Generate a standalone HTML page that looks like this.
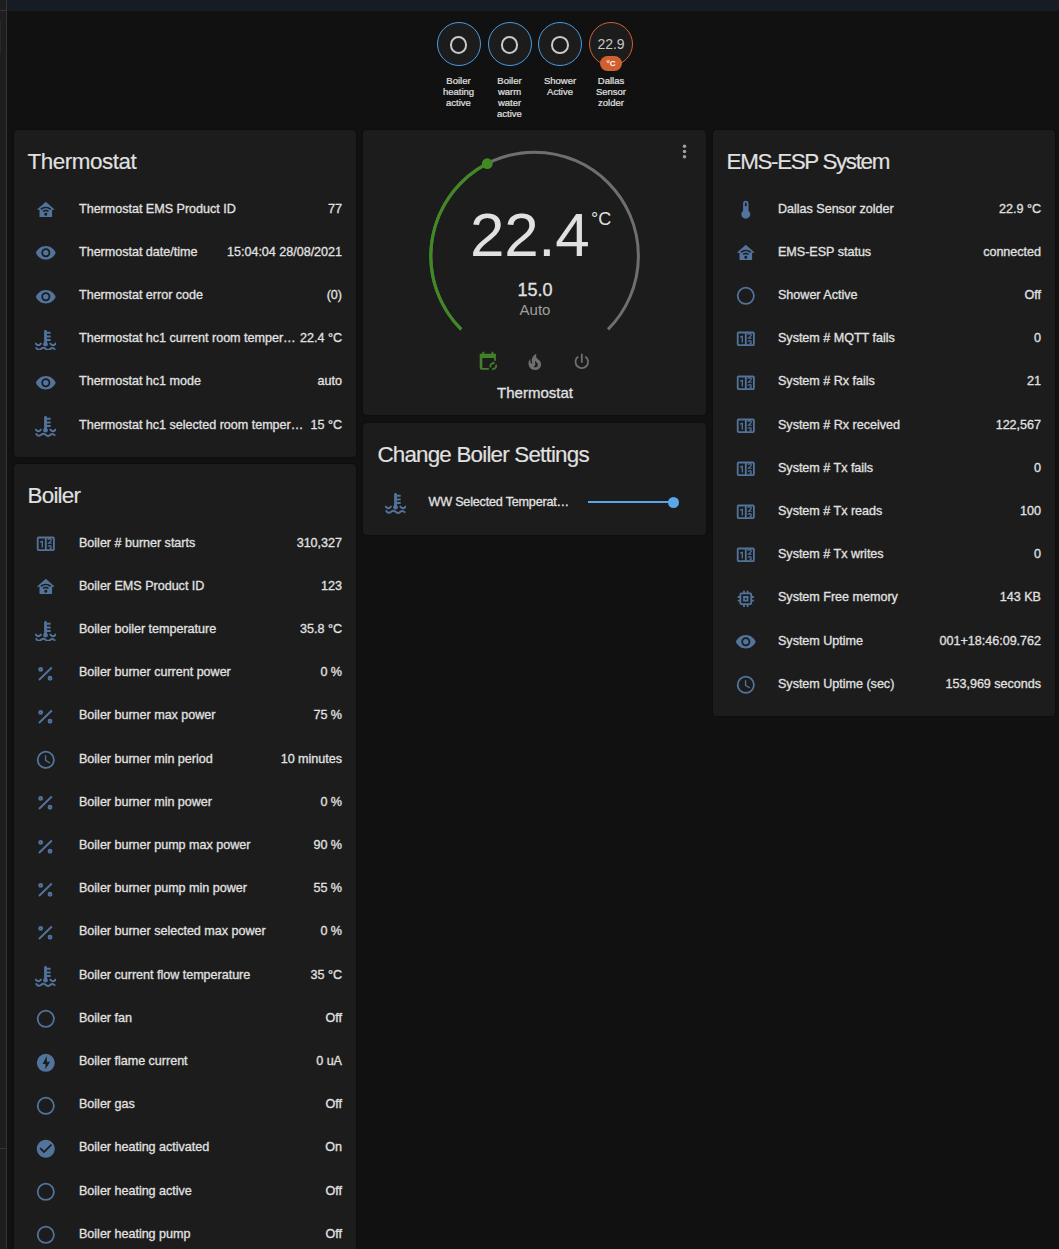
<!DOCTYPE html>
<html><head><meta charset="utf-8"><style>
*{margin:0;padding:0;box-sizing:border-box}
html,body{width:1059px;height:1249px;overflow:hidden;background:#111111;font-family:"Liberation Sans",sans-serif;color:#e1e1e1}
.abs{position:absolute}
.card{position:absolute;background:#1c1c1c;border-radius:4px;box-shadow:0 0 2px rgba(0,0,0,0.6)}
.title{position:absolute;font-size:22.4px;line-height:22px;white-space:nowrap;letter-spacing:-0.45px;color:#e1e1e1;-webkit-text-stroke:0.15px #e1e1e1}
.nm,.val{position:absolute;font-size:12.6px;line-height:18px;white-space:nowrap;color:#e1e1e1;-webkit-text-stroke:0.3px #e1e1e1;letter-spacing:-0.03px}
.ic{position:absolute}
.badge{position:absolute;top:22px;width:44px;height:44px;border-radius:50%;border:1.8px solid #4a9be0;background:#1c1c1c}
.blabel{position:absolute;top:75px;width:50px;text-align:center;font-size:9.5px;line-height:11px;color:#e1e1e1;-webkit-text-stroke:0.2px #e1e1e1}
</style></head>
<body>
<div class="abs" style="left:0;top:0;width:6px;height:1249px;background:#1e1e1e"></div>
<div class="abs" style="left:6px;top:0;width:1px;height:1249px;background:#353535"></div>
<div class="abs" style="left:0;top:10px;width:6px;height:1px;background:#333"></div>
<div class="abs" style="left:0;top:1148px;width:6px;height:1px;background:#333"></div>
<div class="abs" style="left:0;top:20px;width:1px;height:33px;background:#1f2a35"></div>
<div class="abs" style="left:7px;top:0;width:1052px;height:11px;background:#161c23"></div>
<div class="badge" style="left:436.5px;border-color:#4a9be0"></div>
<div class="abs" style="left:449.7px;top:36.2px;width:17.6px;height:17.6px;border-radius:50%;border:2px solid #c8c8c8"></div>
<div class="blabel" style="left:433.5px">Boiler<br>heating<br>active</div>
<div class="badge" style="left:487.5px;border-color:#4a9be0"></div>
<div class="abs" style="left:500.7px;top:36.2px;width:17.6px;height:17.6px;border-radius:50%;border:2px solid #c8c8c8"></div>
<div class="blabel" style="left:484.5px">Boiler<br>warm<br>water<br>active</div>
<div class="badge" style="left:538px;border-color:#4a9be0"></div>
<div class="abs" style="left:551.2px;top:36.2px;width:17.6px;height:17.6px;border-radius:50%;border:2px solid #c8c8c8"></div>
<div class="blabel" style="left:535px">Shower<br>Active</div>
<div class="badge" style="left:589px;border-color:#d0602f"></div>
<div class="abs" style="left:589px;top:36px;width:44px;text-align:center;font-size:14px;line-height:16px;color:#c8c8c8">22.9</div>
<div class="abs" style="left:600px;top:56px;width:22px;height:15px;border-radius:8px;background:#d0602f;color:#fff;font-size:8px;font-weight:bold;text-align:center;line-height:15px">°C</div>
<div class="blabel" style="left:586px">Dallas<br>Sensor<br>zolder</div>
<div class="card" style="left:14px;top:130px;width:342px;height:327px;">
<div class="title" style="left:13.6px;top:20.7px;letter-spacing:-0.45px">Thermostat</div>
<svg class="ic" style="left:20.80px;top:69.20px;width:21.6px;height:21.6px" viewBox="0 0 24 24" fill="#51739c" stroke="#51739c" stroke-width="0"><path d="M12,3L2,12H5V20H19V12H22L12,3M12,8.5C14.34,8.5 16.46,9.43 18,10.94L16.8,12.12C15.58,10.91 13.88,10.17 12,10.17C10.12,10.17 8.42,10.91 7.2,12.12L6,10.94C7.54,9.43 9.66,8.5 12,8.5M12,11.83C13.4,11.83 14.67,12.39 15.6,13.3L14.4,14.47C13.79,13.87 12.94,13.5 12,13.5C11.06,13.5 10.21,13.87 9.6,14.47L8.4,13.3C9.33,12.39 10.6,11.83 12,11.83M12,15.17C12.94,15.17 13.7,15.91 13.7,16.83C13.7,17.750 12.94,18.5 12,18.5C11.06,18.5 10.3,17.75 10.3,16.83C10.3,15.91 11.06,15.17 12,15.17Z"/></svg>
<div class="nm" style="left:65px;top:69.50px">Thermostat EMS Product ID</div>
<div class="val" style="right:14px;top:69.50px">77</div>
<svg class="ic" style="left:20.80px;top:112.40px;width:21.6px;height:21.6px" viewBox="0 0 24 24" fill="#51739c" stroke="#51739c" stroke-width="0"><path d="M12,9A3,3 0 0,0 9,12A3,3 0 0,0 12,15A3,3 0 0,0 15,12A3,3 0 0,0 12,9M12,17A5,5 0 0,1 7,12A5,5 0 0,1 12,7A5,5 0 0,1 17,12A5,5 0 0,1 12,17M12,4.5C7,4.5 2.730,7.61 1,12C2.73,16.39 7,19.5 12,19.5C17,19.5 21.27,16.39 23,12C21.27,7.61 17,4.5 12,4.5Z"/></svg>
<div class="nm" style="left:65px;top:112.70px">Thermostat date/time</div>
<div class="val" style="right:14px;top:112.70px">15:04:04 28/08/2021</div>
<svg class="ic" style="left:20.80px;top:155.60px;width:21.6px;height:21.6px" viewBox="0 0 24 24" fill="#51739c" stroke="#51739c" stroke-width="0"><path d="M12,9A3,3 0 0,0 9,12A3,3 0 0,0 12,15A3,3 0 0,0 15,12A3,3 0 0,0 12,9M12,17A5,5 0 0,1 7,12A5,5 0 0,1 12,7A5,5 0 0,1 17,12A5,5 0 0,1 12,17M12,4.5C7,4.5 2.730,7.61 1,12C2.73,16.39 7,19.5 12,19.5C17,19.5 21.27,16.39 23,12C21.27,7.61 17,4.5 12,4.5Z"/></svg>
<div class="nm" style="left:65px;top:155.90px">Thermostat error code</div>
<div class="val" style="right:14px;top:155.90px">(0)</div>
<svg class="ic" style="left:20.80px;top:198.80px;width:21.6px;height:21.6px" viewBox="0 0 24 24" fill="#51739c" stroke="#51739c" stroke-width="0"><g transform="translate(0.2,1.1)"><g fill="none" stroke-linecap="round"><path d="M11.5,1.5V15.5" stroke-width="3.2"/><path d="M13,3H17.2M13,7.2H17.2M13,11.1H17.2" stroke-width="2.2" stroke-linecap="butt"/><path d="M0.7,15.2Q3.5,18.8 6.3,15.2M16.9,15.2Q19.8,18.8 22.6,15.2" stroke-width="2.2"/><path d="M1.3,20Q2.8,22.6 4.9,21.8Q6.2,21.3 7,20.6Q9.5,18.6 12,21.2Q14.4,23.3 16.6,21.2Q19.2,18.8 21.6,21.3" stroke-width="2.2"/></g><circle cx="11.5" cy="15.8" r="2.6"/></g></svg>
<div class="nm" style="left:65px;top:199.10px">Thermostat hc1 current room temper…</div>
<div class="val" style="right:14px;top:199.10px">22.4 °C</div>
<svg class="ic" style="left:20.80px;top:242.00px;width:21.6px;height:21.6px" viewBox="0 0 24 24" fill="#51739c" stroke="#51739c" stroke-width="0"><path d="M12,9A3,3 0 0,0 9,12A3,3 0 0,0 12,15A3,3 0 0,0 15,12A3,3 0 0,0 12,9M12,17A5,5 0 0,1 7,12A5,5 0 0,1 12,7A5,5 0 0,1 17,12A5,5 0 0,1 12,17M12,4.5C7,4.5 2.730,7.61 1,12C2.73,16.39 7,19.5 12,19.5C17,19.5 21.27,16.39 23,12C21.27,7.61 17,4.5 12,4.5Z"/></svg>
<div class="nm" style="left:65px;top:242.30px">Thermostat hc1 mode</div>
<div class="val" style="right:14px;top:242.30px">auto</div>
<svg class="ic" style="left:20.80px;top:285.20px;width:21.6px;height:21.6px" viewBox="0 0 24 24" fill="#51739c" stroke="#51739c" stroke-width="0"><g transform="translate(0.2,1.1)"><g fill="none" stroke-linecap="round"><path d="M11.5,1.5V15.5" stroke-width="3.2"/><path d="M13,3H17.2M13,7.2H17.2M13,11.1H17.2" stroke-width="2.2" stroke-linecap="butt"/><path d="M0.7,15.2Q3.5,18.8 6.3,15.2M16.9,15.2Q19.8,18.8 22.6,15.2" stroke-width="2.2"/><path d="M1.3,20Q2.8,22.6 4.9,21.8Q6.2,21.3 7,20.6Q9.5,18.6 12,21.2Q14.4,23.3 16.6,21.2Q19.2,18.8 21.6,21.3" stroke-width="2.2"/></g><circle cx="11.5" cy="15.8" r="2.6"/></g></svg>
<div class="nm" style="left:65px;top:285.50px">Thermostat hc1 selected room temper…</div>
<div class="val" style="right:14px;top:285.50px">15 °C</div>
</div>
<div class="card" style="left:14px;top:464px;width:342px;height:900px;">
<div class="title" style="left:13.6px;top:20.7px;letter-spacing:-0.8px">Boiler</div>
<svg class="ic" style="left:20.80px;top:69.20px;width:21.6px;height:21.6px" viewBox="0 0 24 24" fill="#51739c" stroke="#51739c" stroke-width="0"><path d="M4,4H20A2,2 0 0,1 22,6V18A2,2 0 0,1 20,20H4A2,2 0 0,1 2,18V6A2,2 0 0,1 4,4M4,6V18H11V6H4M13,6V18H20V6H13Z"/><path d="M8.9,16H7.4V10.2L5.6,10.8V9.5L8.8,8.4H8.9V16Z"/><path d="M14.5,7.6Q14.6,6.3 16.3,6.3Q18.3,6.4 18,8.2L15.1,11.4H18.6M14.6,15.3Q14.8,14 16.4,14Q18.2,14.1 18.1,15.6Q18,16.9 16.2,17M16.2,17Q18.3,17.1 18.2,18" fill="none" stroke-width="1.3"/></svg>
<div class="nm" style="left:65px;top:69.50px">Boiler # burner starts</div>
<div class="val" style="right:14px;top:69.50px">310,327</div>
<svg class="ic" style="left:20.80px;top:112.40px;width:21.6px;height:21.6px" viewBox="0 0 24 24" fill="#51739c" stroke="#51739c" stroke-width="0"><path d="M12,3L2,12H5V20H19V12H22L12,3M12,8.5C14.34,8.5 16.46,9.43 18,10.94L16.8,12.12C15.58,10.91 13.88,10.17 12,10.17C10.12,10.17 8.42,10.91 7.2,12.12L6,10.94C7.54,9.43 9.66,8.5 12,8.5M12,11.83C13.4,11.83 14.67,12.39 15.6,13.3L14.4,14.47C13.79,13.87 12.94,13.5 12,13.5C11.06,13.5 10.21,13.87 9.6,14.47L8.4,13.3C9.33,12.39 10.6,11.83 12,11.83M12,15.17C12.94,15.17 13.7,15.91 13.7,16.83C13.7,17.750 12.94,18.5 12,18.5C11.06,18.5 10.3,17.75 10.3,16.83C10.3,15.91 11.06,15.17 12,15.17Z"/></svg>
<div class="nm" style="left:65px;top:112.70px">Boiler EMS Product ID</div>
<div class="val" style="right:14px;top:112.70px">123</div>
<svg class="ic" style="left:20.80px;top:155.60px;width:21.6px;height:21.6px" viewBox="0 0 24 24" fill="#51739c" stroke="#51739c" stroke-width="0"><g transform="translate(0.2,1.1)"><g fill="none" stroke-linecap="round"><path d="M11.5,1.5V15.5" stroke-width="3.2"/><path d="M13,3H17.2M13,7.2H17.2M13,11.1H17.2" stroke-width="2.2" stroke-linecap="butt"/><path d="M0.7,15.2Q3.5,18.8 6.3,15.2M16.9,15.2Q19.8,18.8 22.6,15.2" stroke-width="2.2"/><path d="M1.3,20Q2.8,22.6 4.9,21.8Q6.2,21.3 7,20.6Q9.5,18.6 12,21.2Q14.4,23.3 16.6,21.2Q19.2,18.8 21.6,21.3" stroke-width="2.2"/></g><circle cx="11.5" cy="15.8" r="2.6"/></g></svg>
<div class="nm" style="left:65px;top:155.90px">Boiler boiler temperature</div>
<div class="val" style="right:14px;top:155.90px">35.8 °C</div>
<svg class="ic" style="left:20.80px;top:198.80px;width:21.6px;height:21.6px" viewBox="0 0 24 24" fill="#51739c" stroke="#51739c" stroke-width="0"><g fill="none" stroke-width="2.2"><path d="M4.4,18.8L18.7,5"/><circle cx="6.3" cy="7.1" r="1.6"/><circle cx="16.7" cy="16.9" r="1.6"/></g></svg>
<div class="nm" style="left:65px;top:199.10px">Boiler burner current power</div>
<div class="val" style="right:14px;top:199.10px">0 %</div>
<svg class="ic" style="left:20.80px;top:242.00px;width:21.6px;height:21.6px" viewBox="0 0 24 24" fill="#51739c" stroke="#51739c" stroke-width="0"><g fill="none" stroke-width="2.2"><path d="M4.4,18.8L18.7,5"/><circle cx="6.3" cy="7.1" r="1.6"/><circle cx="16.7" cy="16.9" r="1.6"/></g></svg>
<div class="nm" style="left:65px;top:242.30px">Boiler burner max power</div>
<div class="val" style="right:14px;top:242.30px">75 %</div>
<svg class="ic" style="left:20.80px;top:285.20px;width:21.6px;height:21.6px" viewBox="0 0 24 24" fill="#51739c" stroke="#51739c" stroke-width="0"><path d="M12,20A8,8 0 0,0 20,12A8,8 0 0,0 12,4A8,8 0 0,0 4,12A8,8 0 0,0 12,20M12,2A10,10 0 0,1 22,12A10,10 0 0,1 12,22C6.47,22 2,17.5 2,12A10,10 0 0,1 12,2M12.5,7V12.25L17,14.92L16.25,16.15L11,13V7H12.5Z"/></svg>
<div class="nm" style="left:65px;top:285.50px">Boiler burner min period</div>
<div class="val" style="right:14px;top:285.50px">10 minutes</div>
<svg class="ic" style="left:20.80px;top:328.40px;width:21.6px;height:21.6px" viewBox="0 0 24 24" fill="#51739c" stroke="#51739c" stroke-width="0"><g fill="none" stroke-width="2.2"><path d="M4.4,18.8L18.7,5"/><circle cx="6.3" cy="7.1" r="1.6"/><circle cx="16.7" cy="16.9" r="1.6"/></g></svg>
<div class="nm" style="left:65px;top:328.70px">Boiler burner min power</div>
<div class="val" style="right:14px;top:328.70px">0 %</div>
<svg class="ic" style="left:20.80px;top:371.60px;width:21.6px;height:21.6px" viewBox="0 0 24 24" fill="#51739c" stroke="#51739c" stroke-width="0"><g fill="none" stroke-width="2.2"><path d="M4.4,18.8L18.7,5"/><circle cx="6.3" cy="7.1" r="1.6"/><circle cx="16.7" cy="16.9" r="1.6"/></g></svg>
<div class="nm" style="left:65px;top:371.90px">Boiler burner pump max power</div>
<div class="val" style="right:14px;top:371.90px">90 %</div>
<svg class="ic" style="left:20.80px;top:414.80px;width:21.6px;height:21.6px" viewBox="0 0 24 24" fill="#51739c" stroke="#51739c" stroke-width="0"><g fill="none" stroke-width="2.2"><path d="M4.4,18.8L18.7,5"/><circle cx="6.3" cy="7.1" r="1.6"/><circle cx="16.7" cy="16.9" r="1.6"/></g></svg>
<div class="nm" style="left:65px;top:415.10px">Boiler burner pump min power</div>
<div class="val" style="right:14px;top:415.10px">55 %</div>
<svg class="ic" style="left:20.80px;top:458.00px;width:21.6px;height:21.6px" viewBox="0 0 24 24" fill="#51739c" stroke="#51739c" stroke-width="0"><g fill="none" stroke-width="2.2"><path d="M4.4,18.8L18.7,5"/><circle cx="6.3" cy="7.1" r="1.6"/><circle cx="16.7" cy="16.9" r="1.6"/></g></svg>
<div class="nm" style="left:65px;top:458.30px">Boiler burner selected max power</div>
<div class="val" style="right:14px;top:458.30px">0 %</div>
<svg class="ic" style="left:20.80px;top:501.20px;width:21.6px;height:21.6px" viewBox="0 0 24 24" fill="#51739c" stroke="#51739c" stroke-width="0"><g transform="translate(0.2,1.1)"><g fill="none" stroke-linecap="round"><path d="M11.5,1.5V15.5" stroke-width="3.2"/><path d="M13,3H17.2M13,7.2H17.2M13,11.1H17.2" stroke-width="2.2" stroke-linecap="butt"/><path d="M0.7,15.2Q3.5,18.8 6.3,15.2M16.9,15.2Q19.8,18.8 22.6,15.2" stroke-width="2.2"/><path d="M1.3,20Q2.8,22.6 4.9,21.8Q6.2,21.3 7,20.6Q9.5,18.6 12,21.2Q14.4,23.3 16.6,21.2Q19.2,18.8 21.6,21.3" stroke-width="2.2"/></g><circle cx="11.5" cy="15.8" r="2.6"/></g></svg>
<div class="nm" style="left:65px;top:501.50px">Boiler current flow temperature</div>
<div class="val" style="right:14px;top:501.50px">35 °C</div>
<svg class="ic" style="left:20.80px;top:544.40px;width:21.6px;height:21.6px" viewBox="0 0 24 24" fill="#51739c" stroke="#51739c" stroke-width="0"><path d="M12,20A8,8 0 0,1 4,12A8,8 0 0,1 12,4A8,8 0 0,1 20,12A8,8 0 0,1 12,20M12,2A10,10 0 0,0 2,12A10,10 0 0,0 12,22A10,10 0 0,0 22,12A10,10 0 0,0 12,2Z"/></svg>
<div class="nm" style="left:65px;top:544.70px">Boiler fan</div>
<div class="val" style="right:14px;top:544.70px">Off</div>
<svg class="ic" style="left:20.80px;top:587.60px;width:21.6px;height:21.6px" viewBox="0 0 24 24" fill="#51739c" stroke="#51739c" stroke-width="0"><path fill-rule="evenodd" d="M12,2A10,10 0 0,0 2,12A10,10 0 0,0 12,22A10,10 0 0,0 22,12A10,10 0 0,0 12,2M13,4.5L8.5,13.3H11.7L11.5,19.2L16.8,10.8H13.2Z"/></svg>
<div class="nm" style="left:65px;top:587.90px">Boiler flame current</div>
<div class="val" style="right:14px;top:587.90px">0 uA</div>
<svg class="ic" style="left:20.80px;top:630.80px;width:21.6px;height:21.6px" viewBox="0 0 24 24" fill="#51739c" stroke="#51739c" stroke-width="0"><path d="M12,20A8,8 0 0,1 4,12A8,8 0 0,1 12,4A8,8 0 0,1 20,12A8,8 0 0,1 12,20M12,2A10,10 0 0,0 2,12A10,10 0 0,0 12,22A10,10 0 0,0 22,12A10,10 0 0,0 12,2Z"/></svg>
<div class="nm" style="left:65px;top:631.10px">Boiler gas</div>
<div class="val" style="right:14px;top:631.10px">Off</div>
<svg class="ic" style="left:20.80px;top:674.00px;width:21.6px;height:21.6px" viewBox="0 0 24 24" fill="#51739c" stroke="#51739c" stroke-width="0"><path d="M12 2C6.5 2 2 6.5 2 12S6.5 22 12 22 22 17.5 22 12 17.5 2 12 2M10 17L5 12L6.41 10.59L10 14.17L17.59 6.58L19 8L10 17Z"/></svg>
<div class="nm" style="left:65px;top:674.30px">Boiler heating activated</div>
<div class="val" style="right:14px;top:674.30px">On</div>
<svg class="ic" style="left:20.80px;top:717.20px;width:21.6px;height:21.6px" viewBox="0 0 24 24" fill="#51739c" stroke="#51739c" stroke-width="0"><path d="M12,20A8,8 0 0,1 4,12A8,8 0 0,1 12,4A8,8 0 0,1 20,12A8,8 0 0,1 12,20M12,2A10,10 0 0,0 2,12A10,10 0 0,0 12,22A10,10 0 0,0 22,12A10,10 0 0,0 12,2Z"/></svg>
<div class="nm" style="left:65px;top:717.50px">Boiler heating active</div>
<div class="val" style="right:14px;top:717.50px">Off</div>
<svg class="ic" style="left:20.80px;top:760.40px;width:21.6px;height:21.6px" viewBox="0 0 24 24" fill="#51739c" stroke="#51739c" stroke-width="0"><path d="M12,20A8,8 0 0,1 4,12A8,8 0 0,1 12,4A8,8 0 0,1 20,12A8,8 0 0,1 12,20M12,2A10,10 0 0,0 2,12A10,10 0 0,0 12,22A10,10 0 0,0 22,12A10,10 0 0,0 12,2Z"/></svg>
<div class="nm" style="left:65px;top:760.70px">Boiler heating pump</div>
<div class="val" style="right:14px;top:760.70px">Off</div>
</div>
<div class="card" style="left:713px;top:130px;width:342px;height:586px;">
<div class="title" style="left:13.6px;top:20.7px;letter-spacing:-1.35px">EMS-ESP System</div>
<svg class="ic" style="left:21.70px;top:68.80px;width:21.6px;height:21.6px" viewBox="0 0 24 24" fill="#51739c" stroke="#51739c" stroke-width="0"><path d="M15 13V5A3 3 0 0 0 9 5V13A5 5 0 1 0 15 13M12 4A1 1 0 0 1 13 5V8H11V5A1 1 0 0 1 12 4Z"/></svg>
<div class="nm" style="left:65px;top:69.50px">Dallas Sensor zolder</div>
<div class="val" style="right:14px;top:69.50px">22.9 °C</div>
<svg class="ic" style="left:21.70px;top:112.00px;width:21.6px;height:21.6px" viewBox="0 0 24 24" fill="#51739c" stroke="#51739c" stroke-width="0"><path d="M12,3L2,12H5V20H19V12H22L12,3M12,8.5C14.34,8.5 16.46,9.43 18,10.94L16.8,12.12C15.58,10.91 13.88,10.17 12,10.17C10.12,10.17 8.42,10.91 7.2,12.12L6,10.94C7.54,9.43 9.66,8.5 12,8.5M12,11.83C13.4,11.83 14.67,12.39 15.6,13.3L14.4,14.47C13.79,13.87 12.94,13.5 12,13.5C11.06,13.5 10.21,13.87 9.6,14.47L8.4,13.3C9.33,12.39 10.6,11.83 12,11.83M12,15.17C12.94,15.17 13.7,15.91 13.7,16.83C13.7,17.750 12.94,18.5 12,18.5C11.06,18.5 10.3,17.75 10.3,16.83C10.3,15.91 11.06,15.17 12,15.17Z"/></svg>
<div class="nm" style="left:65px;top:112.70px">EMS-ESP status</div>
<div class="val" style="right:14px;top:112.70px">connected</div>
<svg class="ic" style="left:21.70px;top:155.20px;width:21.6px;height:21.6px" viewBox="0 0 24 24" fill="#51739c" stroke="#51739c" stroke-width="0"><path d="M12,20A8,8 0 0,1 4,12A8,8 0 0,1 12,4A8,8 0 0,1 20,12A8,8 0 0,1 12,20M12,2A10,10 0 0,0 2,12A10,10 0 0,0 12,22A10,10 0 0,0 22,12A10,10 0 0,0 12,2Z"/></svg>
<div class="nm" style="left:65px;top:155.90px">Shower Active</div>
<div class="val" style="right:14px;top:155.90px">Off</div>
<svg class="ic" style="left:21.70px;top:198.40px;width:21.6px;height:21.6px" viewBox="0 0 24 24" fill="#51739c" stroke="#51739c" stroke-width="0"><path d="M4,4H20A2,2 0 0,1 22,6V18A2,2 0 0,1 20,20H4A2,2 0 0,1 2,18V6A2,2 0 0,1 4,4M4,6V18H11V6H4M13,6V18H20V6H13Z"/><path d="M8.9,16H7.4V10.2L5.6,10.8V9.5L8.8,8.4H8.9V16Z"/><path d="M14.5,7.6Q14.6,6.3 16.3,6.3Q18.3,6.4 18,8.2L15.1,11.4H18.6M14.6,15.3Q14.8,14 16.4,14Q18.2,14.1 18.1,15.6Q18,16.9 16.2,17M16.2,17Q18.3,17.1 18.2,18" fill="none" stroke-width="1.3"/></svg>
<div class="nm" style="left:65px;top:199.10px">System # MQTT fails</div>
<div class="val" style="right:14px;top:199.10px">0</div>
<svg class="ic" style="left:21.70px;top:241.60px;width:21.6px;height:21.6px" viewBox="0 0 24 24" fill="#51739c" stroke="#51739c" stroke-width="0"><path d="M4,4H20A2,2 0 0,1 22,6V18A2,2 0 0,1 20,20H4A2,2 0 0,1 2,18V6A2,2 0 0,1 4,4M4,6V18H11V6H4M13,6V18H20V6H13Z"/><path d="M8.9,16H7.4V10.2L5.6,10.8V9.5L8.8,8.4H8.9V16Z"/><path d="M14.5,7.6Q14.6,6.3 16.3,6.3Q18.3,6.4 18,8.2L15.1,11.4H18.6M14.6,15.3Q14.8,14 16.4,14Q18.2,14.1 18.1,15.6Q18,16.9 16.2,17M16.2,17Q18.3,17.1 18.2,18" fill="none" stroke-width="1.3"/></svg>
<div class="nm" style="left:65px;top:242.30px">System # Rx fails</div>
<div class="val" style="right:14px;top:242.30px">21</div>
<svg class="ic" style="left:21.70px;top:284.80px;width:21.6px;height:21.6px" viewBox="0 0 24 24" fill="#51739c" stroke="#51739c" stroke-width="0"><path d="M4,4H20A2,2 0 0,1 22,6V18A2,2 0 0,1 20,20H4A2,2 0 0,1 2,18V6A2,2 0 0,1 4,4M4,6V18H11V6H4M13,6V18H20V6H13Z"/><path d="M8.9,16H7.4V10.2L5.6,10.8V9.5L8.8,8.4H8.9V16Z"/><path d="M14.5,7.6Q14.6,6.3 16.3,6.3Q18.3,6.4 18,8.2L15.1,11.4H18.6M14.6,15.3Q14.8,14 16.4,14Q18.2,14.1 18.1,15.6Q18,16.9 16.2,17M16.2,17Q18.3,17.1 18.2,18" fill="none" stroke-width="1.3"/></svg>
<div class="nm" style="left:65px;top:285.50px">System # Rx received</div>
<div class="val" style="right:14px;top:285.50px">122,567</div>
<svg class="ic" style="left:21.70px;top:328.00px;width:21.6px;height:21.6px" viewBox="0 0 24 24" fill="#51739c" stroke="#51739c" stroke-width="0"><path d="M4,4H20A2,2 0 0,1 22,6V18A2,2 0 0,1 20,20H4A2,2 0 0,1 2,18V6A2,2 0 0,1 4,4M4,6V18H11V6H4M13,6V18H20V6H13Z"/><path d="M8.9,16H7.4V10.2L5.6,10.8V9.5L8.8,8.4H8.9V16Z"/><path d="M14.5,7.6Q14.6,6.3 16.3,6.3Q18.3,6.4 18,8.2L15.1,11.4H18.6M14.6,15.3Q14.8,14 16.4,14Q18.2,14.1 18.1,15.6Q18,16.9 16.2,17M16.2,17Q18.3,17.1 18.2,18" fill="none" stroke-width="1.3"/></svg>
<div class="nm" style="left:65px;top:328.70px">System # Tx fails</div>
<div class="val" style="right:14px;top:328.70px">0</div>
<svg class="ic" style="left:21.70px;top:371.20px;width:21.6px;height:21.6px" viewBox="0 0 24 24" fill="#51739c" stroke="#51739c" stroke-width="0"><path d="M4,4H20A2,2 0 0,1 22,6V18A2,2 0 0,1 20,20H4A2,2 0 0,1 2,18V6A2,2 0 0,1 4,4M4,6V18H11V6H4M13,6V18H20V6H13Z"/><path d="M8.9,16H7.4V10.2L5.6,10.8V9.5L8.8,8.4H8.9V16Z"/><path d="M14.5,7.6Q14.6,6.3 16.3,6.3Q18.3,6.4 18,8.2L15.1,11.4H18.6M14.6,15.3Q14.8,14 16.4,14Q18.2,14.1 18.1,15.6Q18,16.9 16.2,17M16.2,17Q18.3,17.1 18.2,18" fill="none" stroke-width="1.3"/></svg>
<div class="nm" style="left:65px;top:371.90px">System # Tx reads</div>
<div class="val" style="right:14px;top:371.90px">100</div>
<svg class="ic" style="left:21.70px;top:414.40px;width:21.6px;height:21.6px" viewBox="0 0 24 24" fill="#51739c" stroke="#51739c" stroke-width="0"><path d="M4,4H20A2,2 0 0,1 22,6V18A2,2 0 0,1 20,20H4A2,2 0 0,1 2,18V6A2,2 0 0,1 4,4M4,6V18H11V6H4M13,6V18H20V6H13Z"/><path d="M8.9,16H7.4V10.2L5.6,10.8V9.5L8.8,8.4H8.9V16Z"/><path d="M14.5,7.6Q14.6,6.3 16.3,6.3Q18.3,6.4 18,8.2L15.1,11.4H18.6M14.6,15.3Q14.8,14 16.4,14Q18.2,14.1 18.1,15.6Q18,16.9 16.2,17M16.2,17Q18.3,17.1 18.2,18" fill="none" stroke-width="1.3"/></svg>
<div class="nm" style="left:65px;top:415.10px">System # Tx writes</div>
<div class="val" style="right:14px;top:415.10px">0</div>
<svg class="ic" style="left:21.70px;top:457.60px;width:21.6px;height:21.6px" viewBox="0 0 24 24" fill="#51739c" stroke="#51739c" stroke-width="0"><path d="M17,17H7V7H17M21,11V9H19V7C19,5.89 18.1,5 17,5H15V3H13V5H11V3H9V5H7C5.89,5 5,5.89 5,7V9H3V11H5V13H3V15H5V17A2,2 0 0,0 7,19H9V21H11V19H13V21H15V19H17A2,2 0 0,0 19,17V15H21V13H19V11M13,13H11V11H13M15,9H9V15H15V9Z"/></svg>
<div class="nm" style="left:65px;top:458.30px">System Free memory</div>
<div class="val" style="right:14px;top:458.30px">143 KB</div>
<svg class="ic" style="left:21.70px;top:500.80px;width:21.6px;height:21.6px" viewBox="0 0 24 24" fill="#51739c" stroke="#51739c" stroke-width="0"><path d="M12,9A3,3 0 0,0 9,12A3,3 0 0,0 12,15A3,3 0 0,0 15,12A3,3 0 0,0 12,9M12,17A5,5 0 0,1 7,12A5,5 0 0,1 12,7A5,5 0 0,1 17,12A5,5 0 0,1 12,17M12,4.5C7,4.5 2.730,7.61 1,12C2.73,16.39 7,19.5 12,19.5C17,19.5 21.27,16.39 23,12C21.27,7.61 17,4.5 12,4.5Z"/></svg>
<div class="nm" style="left:65px;top:501.50px">System Uptime</div>
<div class="val" style="right:14px;top:501.50px">001+18:46:09.762</div>
<svg class="ic" style="left:21.70px;top:544.00px;width:21.6px;height:21.6px" viewBox="0 0 24 24" fill="#51739c" stroke="#51739c" stroke-width="0"><path d="M12,20A8,8 0 0,0 20,12A8,8 0 0,0 12,4A8,8 0 0,0 4,12A8,8 0 0,0 12,20M12,2A10,10 0 0,1 22,12A10,10 0 0,1 12,22C6.47,22 2,17.5 2,12A10,10 0 0,1 12,2M12.5,7V12.25L17,14.92L16.25,16.15L11,13V7H12.5Z"/></svg>
<div class="nm" style="left:65px;top:544.70px">System Uptime (sec)</div>
<div class="val" style="right:14px;top:544.70px">153,969 seconds</div>
</div>
<div class="card" style="left:363px;top:130px;width:343px;height:285px"></div>
<svg class="abs" style="left:0;top:0" width="1059" height="450" viewBox="0 0 1059 450">
<path d="M461.20,329.40 A103.8,103.8 0 1 1 608.00,329.40" fill="none" stroke="#6f6f6f" stroke-width="3"/>
<path d="M461.20,329.40 A103.8,103.8 0 0 1 487.31,163.60" fill="none" stroke="#3f8a22" stroke-width="3"/>
<circle cx="487.31" cy="163.60" r="5.4" fill="#3f8a22"/>
<g fill="#9e9e9e"><circle cx="684.5" cy="146.3" r="1.75"/><circle cx="684.5" cy="151.5" r="1.75"/><circle cx="684.5" cy="156.7" r="1.75"/></g>
</svg>
<div class="abs" style="left:470px;top:200px;font-size:62px;line-height:70px;color:#e1e1e1;letter-spacing:-0.3px">22.4</div>
<div class="abs" style="left:591px;top:208.5px;font-size:18px;line-height:20px;color:#e1e1e1">°C</div>
<div class="abs" style="left:435px;top:280px;width:200px;text-align:center;font-size:18px;line-height:20px;color:#e1e1e1;-webkit-text-stroke:0.3px #e1e1e1">15.0</div>
<div class="abs" style="left:435px;top:301px;width:200px;text-align:center;font-size:15px;line-height:18px;color:#9e9e9e">Auto</div>
<div class="abs" style="left:435px;top:383.6px;width:200px;text-align:center;font-size:15px;line-height:18px;color:#e1e1e1;-webkit-text-stroke:0.3px #e1e1e1">Thermostat</div>
<svg class="abs" style="left:477.1px;top:351.1px;width:21.6px;height:21.6px" viewBox="0 0 24 24" fill="#42802a"><path d="M3,3H21V10.8H19V7.7H5.9V18.9H13.2V20.9H5Q3,20.9 3,18.9Z M6,0.9H8V3H6Z M16.2,0.9H18.2V3H16.2Z"/><g fill="none" stroke="#42802a" stroke-width="1.9"><path d="M15.2,18.2A3.3,3.3 0 0,1 18.1,13.4"/><path d="M21,15.2A3.3,3.3 0 0,1 18.1,20"/></g><path d="M17.6,11.6L20.2,13.4L17.6,15.2Z M18.6,18.2L16,20L18.6,21.8Z"/></svg>
<svg class="abs" style="left:524.2px;top:351.1px;width:21.6px;height:21.6px" viewBox="0 0 24 24" fill="#6f6f6f"><path d="M17.66 11.2C17.43 10.9 17.15 10.64 16.89 10.38C16.22 9.78 15.46 9.35 14.82 8.72C13.33 7.26 13 4.85 13.95 3C13 3.23 12.17 3.75 11.46 4.32C8.87 6.4 7.85 10.07 9.070 13.22C9.11 13.32 9.15 13.42 9.15 13.55C9.15 13.77 9 13.97 8.8 14.05C8.57 14.15 8.33 14.09 8.14 13.93C8.08 13.88 8.04 13.83 8 13.76C6.87 12.33 6.69 10.28 7.45 8.64C5.78 10 4.87 12.3 5 14.47C5.06 14.97 5.12 15.47 5.29 15.97C5.43 16.57 5.7 17.17 6 17.7C7.08 19.43 8.95 20.67 10.96 20.92C13.1 21.19 15.39 20.8 17.03 19.32C18.86 17.66 19.5 15 18.56 12.72L18.43 12.46C18.22 12 17.66 11.2 17.66 11.2M14.5 17.5C14.22 17.74 13.76 18 13.4 18.1C12.28 18.5 11.16 17.94 10.5 17.28C11.69 17 12.4 16.12 12.61 15.23C12.78 14.43 12.46 13.77 12.33 13C12.21 12.26 12.23 11.63 12.5 10.94C12.69 11.32 12.89 11.7 13.13 12C13.9 13 15.11 13.44 15.37 14.8C15.41 14.94 15.43 15.08 15.43 15.23C15.46 16.05 15.1 16.95 14.5 17.5H14.5Z"/></svg>
<svg class="abs" style="left:570.8px;top:350.8px;width:21.6px;height:21.6px" viewBox="0 0 24 24" fill="#6f6f6f"><path d="M16.56,5.44L15.11,6.89C16.84,7.94 18,9.83 18,12A6,6 0 0,1 12,18A6,6 0 0,1 6,12C6,9.83 7.16,7.94 8.88,6.88L7.44,5.44C5.36,6.88 4,9.28 4,12A8,8 0 0,0 12,20A8,8 0 0,0 20,12C20,9.28 18.64,6.88 16.56,5.44M13,3H11V13H13"/></svg>
<div class="card" style="left:363px;top:423px;width:343px;height:112px">
<div class="title" style="left:14.4px;top:21.4px;letter-spacing:-0.8px">Change Boiler Settings</div>
<svg class="ic" style="left:21.60px;top:69.20px;width:21.6px;height:21.6px" viewBox="0 0 24 24" fill="#51739c" stroke="#51739c" stroke-width="0"><g transform="translate(0.2,1.1)"><g fill="none" stroke-linecap="round"><path d="M11.5,1.5V15.5" stroke-width="3.2"/><path d="M13,3H17.2M13,7.2H17.2M13,11.1H17.2" stroke-width="2.2" stroke-linecap="butt"/><path d="M0.7,15.2Q3.5,18.8 6.3,15.2M16.9,15.2Q19.8,18.8 22.6,15.2" stroke-width="2.2"/><path d="M1.3,20Q2.8,22.6 4.9,21.8Q6.2,21.3 7,20.6Q9.5,18.6 12,21.2Q14.4,23.3 16.6,21.2Q19.2,18.8 21.6,21.3" stroke-width="2.2"/></g><circle cx="11.5" cy="15.8" r="2.6"/></g></svg>
<div class="nm" style="left:65.5px;top:69.9px;letter-spacing:-0.2px">WW Selected Temperat…</div>
<div class="abs" style="left:225px;top:78px;width:87px;height:2px;background:#5aa6ea"></div>
<div class="abs" style="left:305.3px;top:73.6px;width:11.2px;height:11.2px;border-radius:50%;background:#5aa6ea"></div>
</div>
</body></html>
